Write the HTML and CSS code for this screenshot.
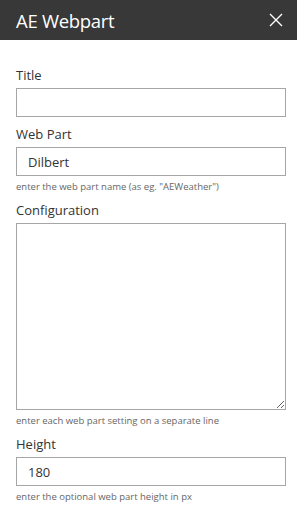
FILE: index.html
```html
<!doctype html>
<html lang="en">
  <head>
    <meta charset="utf-8">
    <title>AE Webpart</title>
    <link rel="stylesheet" href="styles.css">
  </head>
  <body>
    <header class="panel-header">
      <h1>AE Webpart</h1>
      <button class="close" aria-label="Close">
        <svg width="14" height="14" viewBox="0 0 14 14">
          <path d="M1 1 L13 13 M13 1 L1 13" stroke="#fff" stroke-width="1.4" fill="none"/>
        </svg>
      </button>
    </header>

    <main class="panel-body">
      <div class="field">
        <label for="title">Title</label>
        <input id="title" type="text">
      </div>

      <div class="field">
        <label for="webpart">Web Part</label>
        <input id="webpart" type="text" value="Dilbert">
        <p class="hint">enter the web part name (as eg. "AEWeather")</p>
      </div>

      <div class="field">
        <label for="config">Configuration</label>
        <textarea id="config"></textarea>
        <p class="hint">enter each web part setting on a separate line</p>
      </div>

      <div class="field">
        <label for="height">Height</label>
        <input id="height" type="text" value="180">
        <p class="hint">enter the optional web part height in px</p>
      </div>
    </main>
  </body>
</html>
```

FILE: styles.css
```css
:root {
  --header-bg: #383838;
  --border: #a6a6a6;
  --text: #333;
  --hint: #666;
}

html,
body {
  margin: 0;
  background: #fff;
}

body {
  font-family: "Open Sans", "Noto Sans", sans-serif;
  color: var(--text);
}

.panel-header {
  height: 40px;
  background: var(--header-bg);
  display: flex;
  align-items: center;
  justify-content: space-between;
  padding: 0 14px 0 16px;
}

.panel-header h1 {
  margin: 0;
  font-size: 18.5px;
  font-weight: 400;
  color: #fff;
  letter-spacing: -0.3px;
}

.close {
  background: none;
  border: 0;
  padding: 0;
  width: 14px;
  height: 14px;
  display: flex;
}

.panel-body {
  padding: 26px 11px 0 16px;
  display: flex;
  flex-direction: column;
  gap: 8px;
}

.field {
  display: flex;
  flex-direction: column;
}

.field label {
  font-size: 13px;
  line-height: 18px;
  margin-bottom: 4px;
}

.field input,
.field textarea {
  box-sizing: border-box;
  border: 1px solid var(--border);
  border-radius: 0;
  font: inherit;
  font-size: 13px;
  color: var(--text);
  padding: 0 11px;
  margin: 0;
  outline: none;
}

.field input {
  height: 29px;
}

.field textarea {
  height: 187px;
  resize: vertical;
}

.hint {
  margin: 4px 0 0;
  font-size: 9.5px;
  line-height: 13px;
  color: var(--hint);
}
```
